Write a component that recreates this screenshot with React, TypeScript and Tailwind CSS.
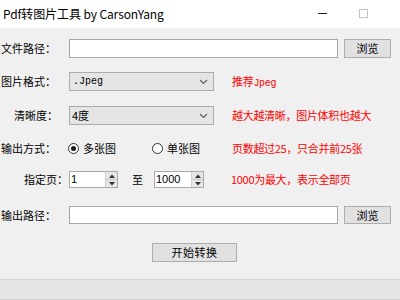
import React from "react";

const cjk = { fontFamily: '"Noto Sans CJK SC", "Noto Sans", sans-serif' };
const mono = { fontFamily: '"Liberation Mono", "Noto Sans CJK SC", monospace' };

function Chevron() {
  return (
    <svg width="9" height="6" viewBox="0 0 9 6" className="absolute right-[5px] top-1/2 -translate-y-1/2">
      <path d="M1 1 L4.5 4.5 L8 1" fill="none" stroke="#606060" strokeWidth="1.2" />
    </svg>
  );
}

function Spin({ value, width }: { value: string; width: string }) {
  return (
    <div className={`${width} h-full bg-white border border-[#a9a9a9] flex items-stretch`}>
      <div className="flex-1 flex items-center pl-[1px] text-[11px] text-black" style={{ fontFamily: '"Liberation Sans", sans-serif' }}>
        {value}
      </div>
      <div className="w-[12px] flex flex-col border-l border-[#d0d0d0]">
        <div className="flex-1 bg-[#e6e6e6] border-b border-[#c8c8c8] flex items-center justify-center">
          <svg width="6" height="4" viewBox="0 0 6 4"><path d="M0 4 L3 0.5 L6 4 Z" fill="#333" /></svg>
        </div>
        <div className="flex-1 bg-[#e6e6e6] flex items-center justify-center">
          <svg width="6" height="4" viewBox="0 0 6 4"><path d="M0 0 L3 3.5 L6 0 Z" fill="#333" /></svg>
        </div>
      </div>
    </div>
  );
}

function Radio({ checked }: { checked: boolean }) {
  return (
    <div className="w-[11px] h-[11px] rounded-full border border-[#333] bg-white flex items-center justify-center">
      {checked && <div className="w-[5px] h-[5px] rounded-full bg-[#1a1a1a]" />}
    </div>
  );
}

export default function App() {
  return (
    <div className="w-[400px] h-[300px] overflow-hidden flex flex-col bg-[#f0f0f0] text-black" style={cjk}>
      {/* Title bar */}
      <div className="h-[28px] bg-white flex items-center shrink-0 relative">
        <span className="ml-[3px] text-[12px] leading-none tracking-[-0.1px]">Pdf转图片工具 by CarsonYang</span>
        <div className="absolute left-[318px] top-[13px] w-[9px] h-[1px] bg-[#222]" />
        <div className="absolute left-[359px] top-[9px] w-[9px] h-[9px] border border-[#c4c4c4]" />
      </div>

      {/* Row 1 */}
      <div className="mt-[11px] h-[19px] flex items-center text-[11px]">
        <div className="w-[69px] pr-[13px] text-right whitespace-nowrap">文件路径：</div>
        <div className="w-[269px] h-full bg-white border border-[#a5a5a5]" />
        <button className="ml-[6px] w-[47px] h-full bg-[#e1e1e1] border border-[#adadad] text-[11px] flex items-center justify-center">浏览</button>
      </div>

      {/* Row 2 */}
      <div className="mt-[14px] h-[19px] flex items-center text-[11px]">
        <div className="w-[69px] pr-[13px] text-right whitespace-nowrap">图片格式：</div>
        <div className="relative w-[145px] h-full bg-[#e5e5e5] border border-[#acacac] flex items-center pl-[3px]">
          <span className="text-[10px]" style={mono}>.Jpeg</span>
          <Chevron />
        </div>
        <div className="ml-[18px] text-[#ff0000] tracking-[-0.3px] whitespace-nowrap">
          推荐<span className="text-[10px]" style={mono}>Jpeg</span>
        </div>
      </div>

      {/* Row 3 */}
      <div className="mt-[15px] h-[19px] flex items-center text-[11px]">
        <div className="w-[69px] pr-[11px] text-right whitespace-nowrap">清晰度：</div>
        <div className="relative w-[145px] h-full bg-[#e5e5e5] border border-[#acacac] flex items-center pl-[2px]">
          <span>4度</span>
          <Chevron />
        </div>
        <div className="ml-[18px] text-[#ff0000] tracking-[-0.3px] whitespace-nowrap">越大越清晰，图片体积也越大</div>
      </div>

      {/* Row 4 */}
      <div className="mt-[14px] h-[19px] flex items-center text-[11px]">
        <div className="w-[68px] pr-[12px] text-right whitespace-nowrap">输出方式：</div>
        <div className="w-[164px] flex items-center">
          <Radio checked />
          <span className="ml-[4px]">多张图</span>
          <div className="ml-[36px]"><Radio checked={false} /></div>
          <span className="ml-[4px]">单张图</span>
        </div>
        <div className="text-[#ff0000] tracking-[-0.3px] whitespace-nowrap">页数超过25，只合并前25张</div>
      </div>

      {/* Row 5 */}
      <div className="mt-[13px] h-[17px] flex items-center text-[11px]">
        <div className="w-[69px] pr-[1px] text-right whitespace-nowrap">指定页：</div>
        <Spin value="1" width="w-[49px]" />
        <div className="ml-[14px] w-[22px]">至</div>
        <Spin value="1000" width="w-[50px]" />
        <div className="ml-[27px] text-[#ff0000] tracking-[-0.3px] whitespace-nowrap">1000为最大，表示全部页</div>
      </div>

      {/* Row 6 */}
      <div className="mt-[18px] h-[18px] flex items-center text-[11px]">
        <div className="w-[69px] pr-[13px] text-right whitespace-nowrap">输出路径：</div>
        <div className="w-[269px] h-full bg-white border border-[#a5a5a5]" />
        <button className="ml-[6px] w-[47px] h-full bg-[#e1e1e1] border border-[#adadad] text-[11px] flex items-center justify-center">浏览</button>
      </div>

      {/* Start button */}
      <div className="mt-[19px] h-[19px] flex">
        <button className="ml-[152px] w-[85px] h-full bg-[#e1e1e1] border border-[#adadad] text-[11px] flex items-center justify-center tracking-[0.5px]">开始转换</button>
      </div>

      <div className="flex-1" />
      <div className="h-[21px] shrink-0 bg-[#e6e6e6] border-t border-[#d4d4d4] border-b border-b-[#cfcfcf]" />
    </div>
  );
}
